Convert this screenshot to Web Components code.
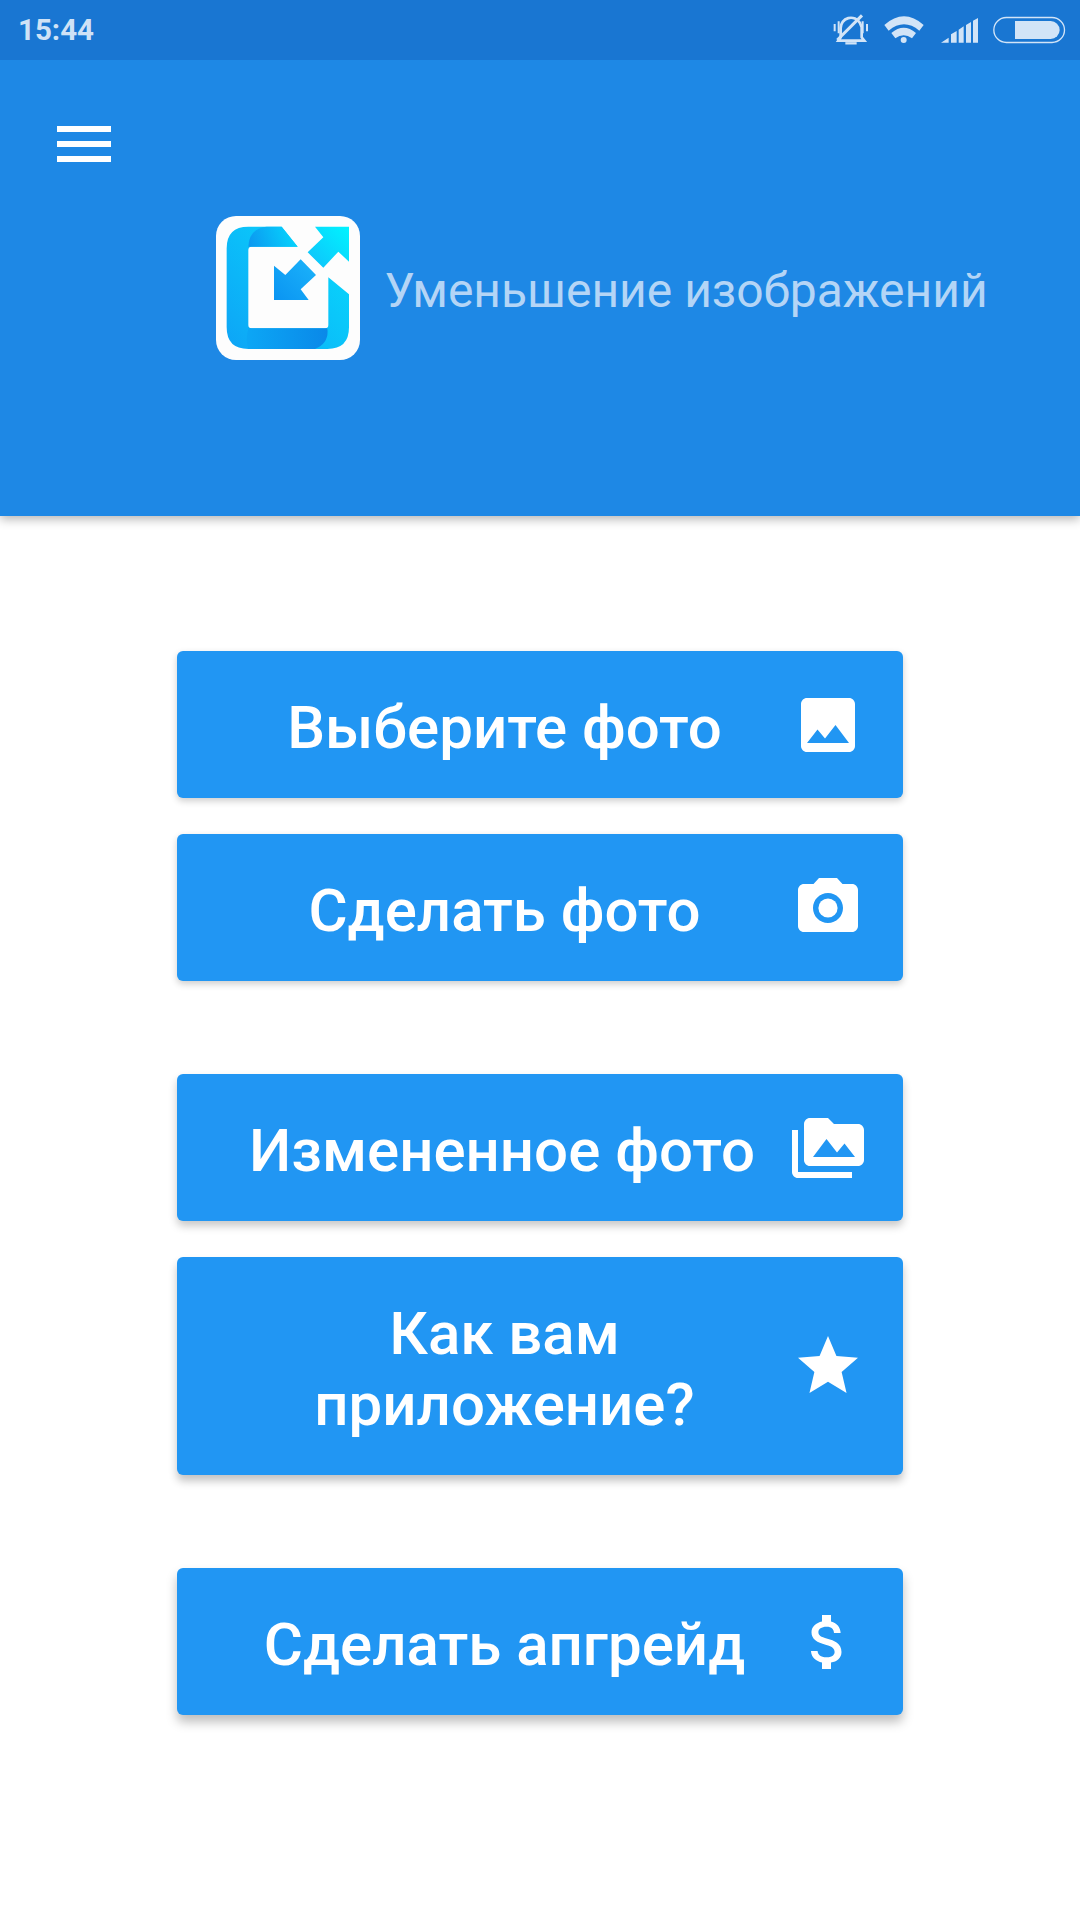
<!doctype html>
<html lang="ru"><head><meta charset="utf-8">
<style>
html,body{margin:0;padding:0;background:#fff;font-family:Roboto,"Liberation Sans",sans-serif}
body{width:1080px;height:1920px;overflow:hidden}
</style></head>
<body>
<app-screen>
  <status-bar slot="top" time="15:44"></status-bar>
  <app-header slot="top" title="Уменьшение изображений"></app-header>
  <div style="height:135px"></div>
  <action-button icon="image" style="--sh:0 3px 7px rgba(0,0,0,.2)">Выберите фото</action-button>
  <div style="height:36px"></div>
  <action-button icon="camera" style="--sh:0 3px 7px rgba(0,0,0,.2)">Сделать фото</action-button>
  <div style="height:93px"></div>
  <action-button icon="folder" style="--sh:0 5px 8px rgba(0,0,0,.22);--shift:-5px">Измененное фото</action-button>
  <div style="height:36px"></div>
  <action-button icon="star" tall style="--sh:0 6px 9px rgba(0,0,0,.24)">Как вам<br>приложение?</action-button>
  <div style="height:93px"></div>
  <action-button icon="dollar" style="--sh:0 7px 11px rgba(0,0,0,.26)">Сделать апгрейд</action-button>
</app-screen>
<script>
class AppScreen extends HTMLElement{constructor(){super();this.attachShadow({mode:'open'}).innerHTML=`
<style>:host{display:flex;flex-direction:column;width:1080px;height:1920px;background:#fff}
.body{display:flex;flex-direction:column;align-items:center}</style>
<slot name="top"></slot><div class="body"><slot></slot></div>`}}
customElements.define('app-screen',AppScreen);

class StatusBar extends HTMLElement{constructor(){super();this.attachShadow({mode:'open'}).innerHTML=`
<style>:host{display:flex;height:60px;background:#1976D2;align-items:center;justify-content:space-between;padding-left:18px;color:#cfe2f6;position:relative;z-index:2}
.t{font:700 29.5px/60px Roboto,sans-serif;letter-spacing:0}
svg{display:block}</style>
<span class="t">${this.getAttribute('time')}</span>
<svg width="280" height="60" viewBox="0 0 840 180" fill="#d2e4f7">
  <g fill="none" stroke="#d2e4f7" stroke-width="8">
    <path d="M122 112V85a31 31 0 0 1 58-16l5 13v30l8 10H115z"/>
    <path d="M104 72v22M116 64v36M188 64v36M201 72v22" stroke-width="6"/>
    <path d="M112 120L186 46" stroke-width="9"/>
    <path d="M136 130h34" stroke-width="7"/>
  </g>
  <path d="M253 75q59-52 118 0l-13 17q-46-38-92 0z"/>
  <path d="M274 99q37-31 74 0l-12 16q-25-18-50 0z"/>
  <circle cx="311" cy="120" r="9"/>
  <path d="M423 128l23-15v15zM453 128v-25l17-10v35zM476 128V89l15-10v49zM498 128V75l15-9v62zM519 128V62l15-8v74z"/>
  <rect x="581.500" y="52.500" width="212" height="75" rx="37.500" fill="none" stroke="#d2e4f7" stroke-width="4"/>
  <path d="M645 63h107a27 27 0 0 1 0 54H645z"/>
</svg>`}}
customElements.define('status-bar',StatusBar);

class AppLogo extends HTMLElement{constructor(){super();this.attachShadow({mode:'open'}).innerHTML=`
<style>:host{display:block;width:144px;height:144px;flex:none}svg{display:block}</style>
<svg width="144" height="144" viewBox="48 48 432 432">
<defs>
<linearGradient id="a" x1="80" y1="447" x2="447" y2="150" gradientUnits="userSpaceOnUse"><stop offset="0" stop-color="#0ea4f6"/><stop offset="1" stop-color="#08d8fc"/></linearGradient>
<linearGradient id="b" x1="150" y1="140" x2="280" y2="90" gradientUnits="userSpaceOnUse"><stop offset="0" stop-color="#0c98f0"/><stop offset="1" stop-color="#06d4fd"/></linearGradient>
<linearGradient id="c" x1="323" y1="200" x2="447" y2="80" gradientUnits="userSpaceOnUse"><stop offset="0" stop-color="#10c0fb"/><stop offset="1" stop-color="#00f4ff"/></linearGradient>
<linearGradient id="d" x1="222" y1="300" x2="348" y2="178" gradientUnits="userSpaceOnUse"><stop offset="0" stop-color="#0a94f2"/><stop offset="1" stop-color="#1cb4fa"/></linearGradient>
<linearGradient id="e" x1="145" y1="415" x2="385" y2="415" gradientUnits="userSpaceOnUse"><stop offset="0" stop-color="#0ca6f5"/><stop offset="1" stop-color="#0a88e8"/></linearGradient>
</defs>
<rect x="48" y="48" width="432" height="432" rx="60" fill="#fdfdfd"/>
<path d="M245 80L293 140H155Q145 140 145 150V375Q145 385 155 385H375Q385 385 385 375V232L447 283V382Q447 447 382 447H145Q80 447 80 382V145Q80 80 145 80Z" fill="url(#a)"/>
<path d="M245 80L293 140H145Q147 85 200 80Z" fill="url(#b)"/>
<path d="M145 385H382Q388 430 345 447H145Q135 420 145 385Z" fill="url(#e)"/>
<path d="M447 80V185L415 155L370 203L323 157L370 112L345 80Z" fill="url(#c)"/>
<path d="M222 300V197L256 225L302 178L348 225L302 268L326 300Z" fill="url(#d)"/>
</svg>`}}
customElements.define('app-logo',AppLogo);

class AppHeader extends HTMLElement{constructor(){super();this.attachShadow({mode:'open'}).innerHTML=`
<style>:host{display:block;height:456px;box-sizing:border-box;background:#1E88E5;padding:66px 0 0 57px;box-shadow:0 3px 10px rgba(0,0,0,.3);position:relative;z-index:1}
.menu{display:flex;flex-direction:column;gap:9px;width:54px}
.menu i{display:block;height:6px;background:#fff}
.row{display:flex;align-items:center;gap:24.500px;margin:54px 0 0 159px}
.title{font:400 48px/56px Roboto,sans-serif;color:#b4d5f6;white-space:nowrap;margin-top:5px}</style>
<div class="menu"><i></i><i></i><i></i></div>
<div class="row"><app-logo></app-logo><span class="title">${this.getAttribute('title')}</span></div>`}}
customElements.define('app-header',AppHeader);

const ICONS={
image:'<path d="M21 19V5c0-1.1-.9-2-2-2H5c-1.1 0-2 .9-2 2v14c0 1.100.9 2 2 2h14c1.100 0 2-.9 2-2zM8.500 13.500l2.500 3.010L14.500 12l4.500 6H5l3.500-4.500z"/>',
camera:'<circle cx="12" cy="12" r="3.200"/><path d="M9 2L7.170 4H4c-1.100 0-2 .9-2 2v12c0 1.100.9 2 2 2h16c1.100 0 2-.9 2-2V6c0-1.100-.9-2-2-2h-3.170L15 2H9zm3 15c-2.760 0-5-2.240-5-5s2.240-5 5-5 5 2.240 5 5-2.240 5-5 5z"/>',
folder:'<path d="M2 6H0v5h.01L0 20c0 1.100.9 2 2 2h18v-2H2V6zm20-2h-8l-2-2H6c-1.100 0-1.990.9-1.990 2L4 16c0 1.100.9 2 2 2h16c1.100 0 2-.9 2-2V6c0-1.100-.9-2-2-2zM7 15l4.500-6 3.500 4.510 2.500-3.010L21 15H7z"/>',
star:'<path d="M12 17.270L18.180 21l-1.640-7.030L22 9.240l-7.190-.61L12 2 9.190 8.630 2 9.240l5.460 4.730L5.820 21z"/>',
dollar:'<path d="M11.800 10.900c-2.270-.59-3-1.200-3-2.150 0-1.090 1.010-1.850 2.700-1.850 1.780 0 2.440.85 2.500 2.100h2.210c-.07-1.720-1.120-3.300-3.210-3.810V3h-3v2.160c-1.940.42-3.500 1.680-3.500 3.610 0 2.310 1.910 3.460 4.700 4.130 2.500.6 3 1.480 3 2.410 0 .69-.49 1.790-2.700 1.790-2.060 0-2.870-.92-2.980-2.100h-2.200c.12 2.190 1.760 3.420 3.680 3.830V21h3v-2.150c1.950-.37 3.500-1.500 3.500-3.550 0-2.840-2.430-3.810-4.700-4.400z"/>'};
class ActionButton extends HTMLElement{constructor(){super();const tall=this.hasAttribute('tall');this.attachShadow({mode:'open'}).innerHTML=`
<style>:host{display:flex;align-items:center;box-sizing:border-box;width:726px;height:${tall?218:147}px;padding:0 39px 0 40px;background:#2196F3;border-radius:6px;box-shadow:var(--sh);color:#fff}
.t{flex:1;text-align:center;font:500 60px/71px Roboto,sans-serif;padding-top:5px;margin-left:var(--shift,0)}
svg{display:block;flex:none;fill:#fff}</style>
<span class="t"><slot></slot></span>
<svg width="72" height="72" viewBox="0 0 24 24">${ICONS[this.getAttribute('icon')]}</svg>`}}
customElements.define('action-button',ActionButton);
</script>
</body></html>
